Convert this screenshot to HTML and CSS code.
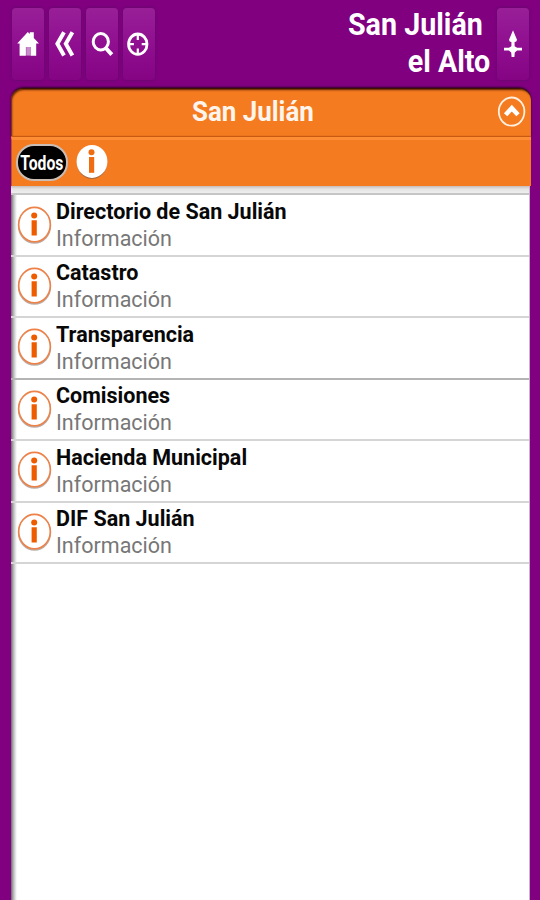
FILE: index.html
```html
<!DOCTYPE html>
<html lang="es">
<head>
<meta charset="utf-8">
<title>San Julián el Alto</title>
<link rel="stylesheet" href="styles.css">
</head>
<body>
<svg class="defs" aria-hidden="true">
  <symbol id="info" viewBox="0 0 35 39">
    <ellipse cx="17.5" cy="19.5" rx="15.8" ry="17.4" fill="none" stroke="#8d7468" stroke-opacity=".6" stroke-width="1.8"/>
    <ellipse cx="17.5" cy="18.6" rx="15.8" ry="17.2" fill="#fff" stroke="#ed8148" stroke-width="1.6"/>
    <circle cx="17.2" cy="9.4" r="3" fill="#ee5c00"/>
    <path d="M14.6 14.2h5.2v15.2h-5.2z" fill="#ee5c00"/>
  </symbol>
</svg>
<header class="top">
  <nav class="tools">
    <button class="tool" aria-label="Inicio"><svg viewBox="0 0 32 72"><path d="M5.2 35.6L15.8 24l2 2v-1.8h4v5.9l5.2 5.5h-2.8V47.8h-5.7v-8.9h-4.6v8.9H7.6V35.6z" fill="#fff"/><path d="M14.2 39h4v8.6h-4z" fill="#c98bc9"/></svg></button>
    <button class="tool" aria-label="Atrás"><svg viewBox="0 0 32 72"><path d="M15 24.2L8.4 35.8 15 47.6M23.4 24.2l-6.6 11.6 6.6 11.8" fill="none" stroke="#fff" stroke-width="4"/></svg></button>
    <button class="tool" aria-label="Buscar"><svg viewBox="0 0 32 72"><ellipse cx="14.8" cy="33.8" rx="7.6" ry="8.2" fill="none" stroke="#fff" stroke-width="3"/><path d="M19.8 40l6 6.6" stroke="#fff" stroke-width="4"/></svg></button>
    <button class="tool" aria-label="Ubicación"><svg viewBox="0 0 32 72"><ellipse cx="14.8" cy="36.2" rx="9.2" ry="10.2" fill="none" stroke="#fff" stroke-width="2.8"/><path d="M14.8 27v5M14.8 40.5v5M6.3 36.2h4.6M18.7 36.2h4.6" stroke="#fff" stroke-width="2.2"/></svg></button>
  </nav>
  <h1 class="brand"><span class="first">San Julián</span><span>el Alto</span></h1>
  <button class="tool" aria-label="Mapa"><svg viewBox="0 0 32 72"><path d="M16 22.3l4 9.5q-.4 2.4-2.4 2.2v4.2l2.5 1.5H25v2.8h-4.9l-2.3 2-.4 4.5h-2.8l-.4-4.5-2.3-2H7v-2.8h4.9l2.5-1.5V34q-2 .2-2.4-2.2z" fill="#fff"/></svg></button>
</header>
<main class="panel">
  <div class="title">
    <h2><span>San Julián</span></h2>
    <svg class="up" viewBox="0 0 30 32"><ellipse cx="14.6" cy="15.6" rx="12.8" ry="14.1" fill="none" stroke="#fff0df" stroke-width="1.8"/><path d="M8.6 18.8l6.2-6.6 6.2 6.6" fill="none" stroke="#fff" stroke-width="4.6"/></svg>
  </div>
  <div class="filters">
    <button class="all"><span>Todos</span></button>
    <svg class="filter-info" viewBox="0 0 32 36"><ellipse cx="16" cy="18.8" rx="15" ry="16.2" fill="#a96a42"/><ellipse cx="16" cy="17.4" rx="15.4" ry="16.5" fill="#fff"/><circle cx="15.5" cy="8.3" r="3" fill="#f06c12"/><path d="M13 13h5.2v15.8H13z" fill="#f06c12"/></svg>
  </div>
  <ul class="list">
    <li><svg class="icon"><use href="#info"/></svg><div class="copy"><strong>Directorio de San Julián</strong><span>Información</span></div></li>
    <li><svg class="icon"><use href="#info"/></svg><div class="copy"><strong>Catastro</strong><span>Información</span></div></li>
    <li class="dark"><svg class="icon"><use href="#info"/></svg><div class="copy"><strong>Transparencia</strong><span>Información</span></div></li>
    <li><svg class="icon"><use href="#info"/></svg><div class="copy"><strong>Comisiones</strong><span>Información</span></div></li>
    <li><svg class="icon"><use href="#info"/></svg><div class="copy"><strong>Hacienda Municipal</strong><span>Información</span></div></li>
    <li><svg class="icon"><use href="#info"/></svg><div class="copy"><strong>DIF San Julián</strong><span>Información</span></div></li>
  </ul>
</main>
</body>
</html>
```
FILE: styles.css
```css
* { box-sizing: border-box; }
body {
  margin: 0;
  height: 900px;
  overflow: hidden;
  display: flex;
  flex-direction: column;
  background: #800080;
  font-family: Roboto, "Liberation Sans", sans-serif;
}
button { border: 0; padding: 0; font: inherit; }
.defs { position: absolute; width: 0; height: 0; }
.top {
  height: 88px;
  flex: none;
  display: flex;
  padding: 8px 11px 0 12px;
}
.tools { display: flex; gap: 5px; }
.tool {
  width: 32px;
  height: 72px;
  flex: none;
  border-radius: 4px;
  background: linear-gradient(#981f98, #900f90 50%, #840484);
  box-shadow: 0 0 2px 1px #6d0870;
}
.tool svg { display: block; width: 32px; height: 72px; }
.brand {
  flex: 1;
  display: flex;
  flex-direction: column;
  align-items: flex-end;
  margin: -2px 7px 0 0;
  color: #fff;
  font-size: 31px;
  font-weight: 700;
  line-height: 37px;
}
.brand span { transform: scaleX(.925); transform-origin: right; }
.brand .first { margin-right: 7px; }
.panel {
  flex: 1;
  margin: 0 9px 0 11px;
  display: flex;
  flex-direction: column;
}
.title {
  height: 49px;
  flex: none;
  display: flex;
  align-items: flex-start;
  border-top: 1px solid #3b1300;
  border-bottom: 1px solid #c85b10;
  border-radius: 12px 12px 0 0;
  background: #f47b20;
  box-shadow: inset 1px 1px 2px #552000, 0 -1px 2px #35002d;
}
.title h2 {
  flex: 1;
  margin: 6px 2px 0 0;
  text-align: center;
  color: #fff5ec;
  font-size: 28px;
  line-height: 34px;
  font-weight: 700;
}
.title h2 span { display: inline-block; transform: scaleX(.925); }
.up { width: 30px; height: 32px; margin: 7px 4px 0 0; }
.filters {
  height: 49px;
  flex: none;
  display: flex;
  align-items: flex-start;
  padding: 4px 0 0 5px;
  border-top: 3px solid #ff8d35;
  border-left: 1px solid #b6581c;
  background: #f47b20;
  gap: 8px;
}
.all {
  width: 52px;
  height: 37px;
  margin-left: -1px;
  border: 2px solid #c9bdb5;
  border-radius: 18px;
  background: #000;
  color: #fff;
  font-size: 21px;
  font-weight: 700;
  display: flex;
  align-items: center;
  justify-content: center;
}
.all span { transform: scaleX(.75); }
.filter-info { width: 32px; height: 36px; }
.list {
  flex: 1;
  margin: 0 1px 0 0;
  padding: 9.6px 0 0;
  list-style: none;
  border-right: 1px solid #c9b3cd;
  background:
    linear-gradient(#c8bdb8, #e4e4e4 3px, #eee 7px, #c6c6c6 7px, #c6c6c6 9px, transparent 9px) no-repeat,
    linear-gradient(90deg, #6d6570, #a9aaa9 2px, #dadada 4px, #fff 6px);
}
.list li {
  height: 61.4px;
  display: flex;
  border-bottom: 2px solid #d5d5d5;
}
.list .dark { border-color: #b4b4b4; }
.icon { width: 35px; height: 39px; margin: 10px 0 0 6px; flex: none; }
.copy {
  display: flex;
  flex-direction: column;
  align-items: flex-start;
  margin: 2.4px 0 0 4px;
  font-size: 22.5px;
  line-height: 27px;
}
.copy strong, .copy span {
  transform: scaleX(.956);
  transform-origin: left;
  white-space: nowrap;
}
.copy strong { color: #080808; font-weight: 700; }
.copy span { color: #777; }
```
